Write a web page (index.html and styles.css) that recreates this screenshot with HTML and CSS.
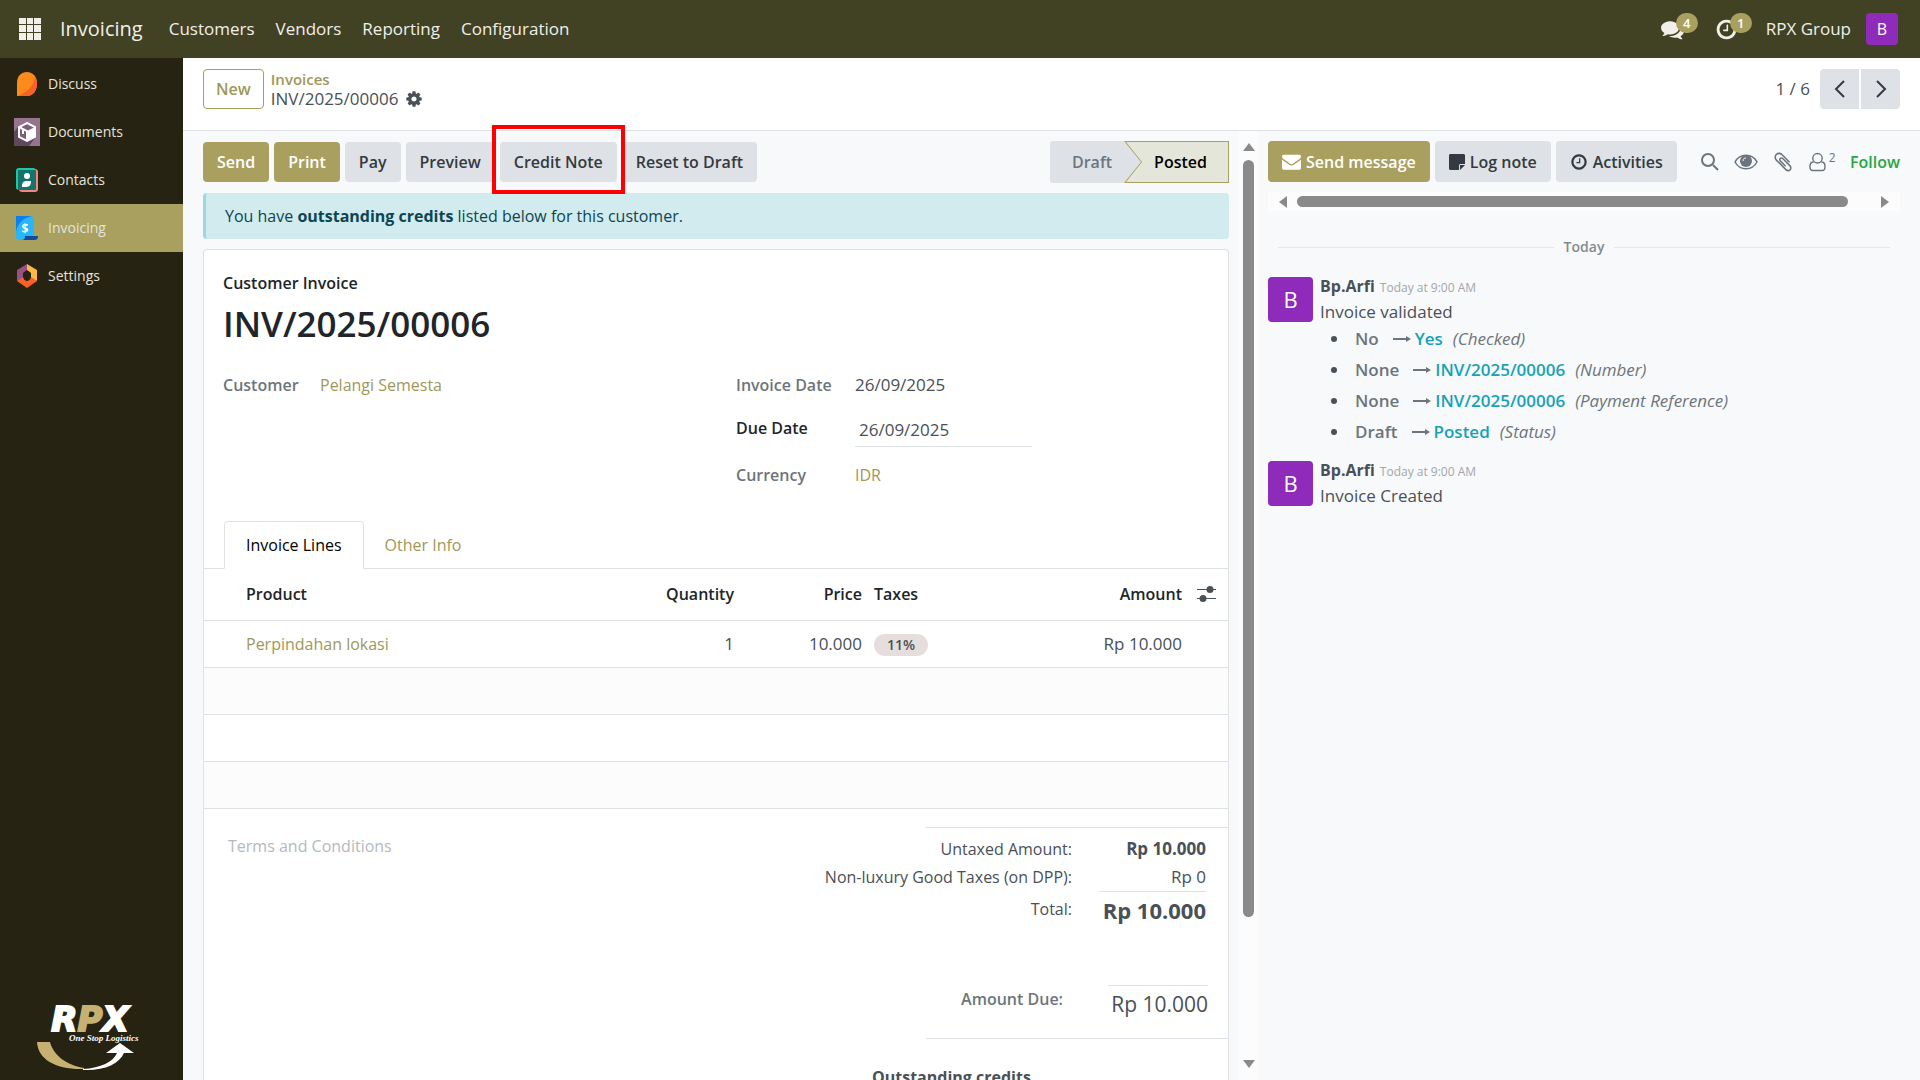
FILE: index.html
```html
<!DOCTYPE html>
<html lang="en">
<head>
<meta charset="utf-8">
<title>INV/2025/00006 - Invoicing</title>
<link rel="stylesheet" href="styles.css">
</head>
<body>
<svg class="defs" aria-hidden="true">
  <symbol id="cog" viewBox="0 0 1792 1792"><path d="M1152 896q0-106-75-181t-181-75-181 75-75 181 75 181 181 75 181-75 75-181zm512-109v222q0 12-8 23t-20 13l-185 28q-19 54-39 91 35 50 107 138 10 12 10 25t-9 23q-27 37-99 108t-94 71q-12 0-26-9l-138-108q-44 23-91 38-16 136-29 186-7 28-36 28h-222q-14 0-24.500-8.500t-11.500-21.500l-28-184q-49-16-90-37l-141 107q-10 9-25 9-14 0-25-11-126-114-165-168-7-10-7-23 0-12 8-23 15-21 51-66.500t54-70.500q-27-50-41-99l-183-27q-13-2-21-12.500t-8-23.500v-222q0-12 8-23t19-13l186-28q14-46 39-92-40-57-107-138-10-12-10-24 0-10 9-23 26-36 98.500-107.500t94.500-71.500q13 0 26 10l138 107q44-23 91-38 16-136 29-186 7-28 36-28h222q14 0 24.500 8.500t11.500 21.500l28 184q49 16 90 37l142-107q9-9 24-9 13 0 25 10 129 119 165 170 7 8 7 22 0 12-8 23-15 21-51 66.500t-54 70.500q26 50 41 98l183 28q13 2 21 12.500t8 23.500z"/></symbol>
  <symbol id="comments" viewBox="0 0 1792 1792"><path d="M1408 768q0 139-94 257t-256.500 186.500-353.500 68.500q-86 0-176-16-124 88-278 128-36 9-86 16h-3q-11 0-20.500-8t-11.500-21q-1-3-1-6.500t.5-6.500 2-6l2.500-5 3.500-5.500 4-5 4.500-5 4-4.500q5-6 23-25t26-29.500 22.500-29 25-38.500 20.500-44q-124-72-195-177t-71-224q0-139 94-257t256.500-186.500 353.500-68.500 353.500 68.500 256.500 186.500 94 257zm384 256q0 120-71 224.500t-195 176.500q10 24 20.500 44t25 38.500 22.500 29 26 29.500 23 25q1 1 4 4.500t4.500 5 4 5 3.500 5.500l2.500 5 2 6 .5 6.500-1 6.500q-3 14-13 22t-22 7q-50-7-86-16-154-40-278-128-90 16-176 16-271 0-472-132 58 4 88 4 161 0 309-45t264-129q125-92 192-212t67-254q0-77-23-152 129 71 204 178t75 230z"/></symbol>
  <symbol id="clock" viewBox="0 0 1792 1792"><path d="M1024 544v448q0 14-9 23t-23 9h-320q-14 0-23-9t-9-23v-64q0-14 9-23t23-9h224v-352q0-14 9-23t23-9h64q14 0 23 9t9 23zm416 352q0-148-73-273t-198-198-273-73-273 73-198 198-73 273 73 273 198 198 273 73 273-73 198-198 73-273zm224 0q0 209-103 385.500t-279.500 279.500-385.500 103-385.500-103-279.500-279.500-103-385.500 103-385.500 279.500-279.500 385.500-103 385.500 103 279.500 279.500 103 385.500z"/></symbol>
  <symbol id="envelope" viewBox="0 0 1792 1792"><path d="M1792 710v794q0 66-47 113t-113 47h-1472q-66 0-113-47t-47-113v-794q44 49 101 87 362 246 497 345 57 42 92.500 65.500t94.500 48 110 24.500h2q51 0 110-24.500t94.500-48 92.500-65.500q170-123 498-345 57-39 100-87zm0-294q0 79-49 151t-122 123q-376 261-468 325-10 7-42.500 31t-54 38.500-52 32.500-57.500 27-50 9h-2q-23 0-50-9t-57.500-27-52-32.500-54-38.500-42.500-31q-91-64-262-182.500t-205-142.500q-62-42-117-115.500t-55-136.500q0-78 41.500-130t118.500-52h1472q65 0 112.500 47t47.500 113z"/></symbol>
  <symbol id="clip" viewBox="0 0 1792 1792"><path d="M1596 1385q0 117-79 196t-196 79q-135 0-235-100l-777-776q-113-115-113-271 0-159 110-270t269-111q158 0 273 113l605 606q10 10 10 22 0 16-30.500 46.500t-46.500 30.500q-13 0-23-10l-606-607q-79-77-181-77-106 0-179 75t-73 181q0 105 76 181l776 777q63 63 145 63 64 0 106-42t42-106q0-82-63-145l-581-581q-26-24-60-24-29 0-48 19t-19 48q0 32 25 59l410 410q10 10 10 22 0 16-31 47t-47 31q-12 0-22-10l-410-410q-63-61-63-149 0-82 57-139t139-57q88 0 149 63l581 581q100 98 100 235z"/></symbol>
  <symbol id="arrow" viewBox="0 0 18 10"><path d="M0 4h13V2l5 3-5 3V6H0z"/></symbol>
</svg>

<header class="navbar">
  <button class="apps" aria-label="Home menu">
    <svg width="22" height="22" viewBox="0 0 22 22"><path d="M0 0h7v6H0zM8 0h6v6H8zM15 0h7v6h-7zM0 7h7v7H0zM8 7h6v7H8zM15 7h7v7h-7zM0 15h7v7H0zM8 15h6v7H8zM15 15h7v7h-7z" fill="#f0efea"/></svg>
  </button>
  <a class="brand" href="#">Invoicing</a>
  <nav class="menu">
    <a href="#">Customers</a><a href="#">Vendors</a><a href="#">Reporting</a><a href="#">Configuration</a>
  </nav>
  <div class="systray">
    <button class="tray" aria-label="Messages"><svg width="23" height="23"><use href="#comments"/></svg><span class="count">4</span></button>
    <button class="tray" aria-label="Activities"><svg width="23" height="23"><use href="#clock"/></svg><span class="count">1</span></button>
    <span class="company">RPX Group</span>
    <button class="user">B</button>
  </div>
</header>

<div class="shell">
  <aside class="sidebar">
    <nav>
      <a class="app" href="#"><svg width="22" height="24" viewBox="0 0 20 24"><path d="M0 24V11C0 4 4 0 10 0s10 5 10 11-3 13-10 13z" fill="#fc8a1c"/><path d="M18 5c1 2 2 4 2 7 0 7-4 12-10 12H1C9 21 17 14 18 5z" fill="#f8602c"/></svg>Discuss</a>
      <a class="app wide" href="#"><svg width="26" height="28" viewBox="0 0 26 28"><path d="M0 0h26v28H0z" fill="#967490"/><path d="M4 9L0 14v14h15l7-9z" fill="#5f475c"/><path d="M13 5l8 4v10l-8 4-8-4V9z" fill="#7d5f78" stroke="#fff" stroke-width="2"/><path d="M13 13l8-4v10l-8 4z" fill="#fff"/><path d="M5 9l8 4v9M9 11v5" fill="none" stroke="#fff" stroke-width="2"/></svg>Documents</a>
      <a class="app" href="#"><svg width="22" height="24" viewBox="0 0 22 24"><rect x="3" y="1" width="19" height="23" rx="3" fill="#f28482"/><rect width="20" height="22" rx="3" fill="#1bc8a8"/><rect x="2" y="2" width="18" height="20" rx="1" fill="#15736c"/><circle cx="11" cy="8" r="3" fill="#fff"/><path d="M6 18c0-4 2-5 5-5h4c0 3-1 6-5 6H6z" fill="#fff"/></svg>Contacts</a>
      <a class="app active" href="#"><svg width="22" height="24" viewBox="0 0 22 24"><path d="M0 0h14c3 0 4 2 4 5v14l-9 5H3c-2 0-3-1-3-3z" fill="#2bb5f9"/><path d="M0 0h16C8 2 2 6 0 16z" fill="#0e80ee"/><path d="M9 20h13c0 3-1 4-4 4H5c3 0 4-1 4-4z" fill="#14499b"/><text x="9" y="17" text-anchor="middle" class="dollar">$</text></svg>Invoicing</a>
      <a class="app" href="#"><svg width="22" height="24" viewBox="0 0 22 24"><path d="M11 0L1 6v11l6-3V9l4-3z" fill="#985184"/><path d="M11 0l10 6v11l-6-3V9l-4-3z" fill="#fbb945"/><path d="M1 17l6-4 4 4 4-4 6 4-10 7z" fill="#fa6128"/><ellipse cx="11" cy="12" rx="4" ry="5" fill="#262312"/></svg>Settings</a>
    </nav>
    <svg class="logo" width="108" height="76" viewBox="0 -16 108 76" role="img" aria-label="RPX One Stop Logistics">
      <path d="M0 31h13c3 12 15 23 34 26v1C20 59 1 49 0 31z" fill="#c6b172"/>
      <path d="M46 58c18-1 30-7 34-16h-11l14-10 14 10H87c-5 11-20 18-41 17z" fill="#fff"/>
      <text x="53" y="20" text-anchor="middle" class="logo-name">R<tspan class="gold">P</tspan>X</text>
      <text x="32" y="30" class="logo-tag">One Stop Logistics</text>
    </svg>
  </aside>

  <main class="content">
    <div class="control-panel">
      <button class="btn outline">New</button>
      <div class="crumbs">
        <a href="#">Invoices</a>
        <span class="current">INV/2025/00006 <svg width="18" height="18"><use href="#cog"/></svg></span>
      </div>
      <div class="pager">
        <span>1 / 6</span>
        <button class="btn prev" aria-label="Previous"><svg width="12" height="20" viewBox="0 0 12 20"><path d="M10 2L2 10l8 8"/></svg></button>
        <button class="btn next" aria-label="Next"><svg width="12" height="20" viewBox="0 0 12 20"><path d="M2 2l8 8-8 8"/></svg></button>
      </div>
    </div>

    <div class="view">
      <section class="form">
        <div class="statusbar">
          <div class="actions">
            <button class="btn primary">Send</button>
            <button class="btn primary">Print</button>
            <button class="btn">Pay</button>
            <button class="btn">Preview</button>
            <span class="marked"><button class="btn">Credit Note</button></span>
            <button class="btn">Reset to Draft</button>
          </div>
          <div class="stages">
            <span class="stage">Draft</span>
            <span class="stage now"><svg width="105" height="42" viewBox="0 0 105 42"><path d="M0 0h105v42H0l17-21z" fill="#a9a05f"/><path d="M2 1h102v40H2l16-20z" fill="#e5e6da"/></svg><b>Posted</b></span>
          </div>
        </div>

        <div class="alert">You have <b>outstanding credits</b> listed below for this customer.</div>

        <div class="sheet">
          <div class="kind">Customer Invoice</div>
          <h1>INV/2025/00006</h1>
          <div class="fields">
            <div class="field customer"><span class="label">Customer</span><a href="#">Pelangi Semesta</a></div>
            <div class="group">
              <div class="field"><span class="label">Invoice Date</span><span class="date">26/09/2025</span></div>
              <div class="field due"><label class="label" for="due">Due Date</label><input id="due" class="date" type="text" value="26/09/2025"></div>
              <div class="field"><span class="label">Currency</span><a href="#">IDR</a></div>
            </div>
          </div>

          <div class="tabs" role="tablist">
            <button class="tab on" role="tab">Invoice Lines</button>
            <button class="tab" role="tab">Other Info</button>
          </div>

          <table class="lines">
            <colgroup><col><col class="c-qty"><col class="c-price"><col class="c-tax"><col class="c-amount"><col class="c-opt"></colgroup>
            <thead><tr><th>Product</th><th class="num">Quantity</th><th class="num">Price</th><th class="tax">Taxes</th><th class="num">Amount</th><th class="opt"><svg width="19" height="18" viewBox="0 0 19 18"><path d="M0 4h19v1H0zM0 13h19v1H0z"/><circle cx="13" cy="4.500" r="3.500"/><circle cx="6" cy="13.500" r="3.500"/></svg></th></tr></thead>
            <tbody>
              <tr><td><a href="#">Perpindahan lokasi</a></td><td class="num">1</td><td class="num">10.000</td><td class="tax"><span class="badge">11%</span></td><td class="num">Rp 10.000</td><td></td></tr>
              <tr class="alt"><td colspan="6"></td></tr>
              <tr><td colspan="6"></td></tr>
              <tr class="alt"><td colspan="6"></td></tr>
            </tbody>
          </table>

          <div class="footer">
            <textarea class="terms" placeholder="Terms and Conditions" aria-label="Terms and Conditions"></textarea>
            <div class="totals">
              <div class="rule"></div>
              <dl class="sums">
                <dt>Untaxed Amount:</dt><dd><b>Rp 10.000</b></dd>
                <dt>Non-luxury Good Taxes (on DPP):</dt><dd>Rp 0</dd>
                <dt class="grand">Total:</dt><dd class="grand"><b>Rp 10.000</b></dd>
              </dl>
              <dl class="due-sum"><dt>Amount Due:</dt><dd>Rp 10.000</dd></dl>
              <div class="rule"></div>
              <div class="credits">Outstanding credits</div>
            </div>
          </div>
        </div>
      </section>

      <div class="vscroll" aria-hidden="true">
        <svg width="12" height="8" viewBox="0 0 12 8"><path d="M6 0l6 8H0z"/></svg>
        <div class="vtrack"><div class="thumb"></div></div>
        <svg width="12" height="8" viewBox="0 0 12 8"><path d="M0 0h12L6 8z"/></svg>
      </div>

      <aside class="chatter">
        <div class="topbar">
          <button class="btn primary"><svg width="19" height="19"><use href="#envelope"/></svg>Send message</button>
          <button class="btn"><svg width="16" height="16" viewBox="0 0 16 16"><path d="M1 0h14l1 1v9h-5l-1 1v5H1l-1-1V1zM11 11h5l-5 5z"/></svg>Log note</button>
          <button class="btn"><svg width="18" height="18"><use href="#clock"/></svg>Activities</button>
          <div class="tools">
            <button aria-label="Search"><svg width="20" height="20" viewBox="0 0 20 20" class="line"><circle cx="8" cy="8" r="6"/><path d="M13 13l5 5"/></svg></button>
            <button aria-label="View"><svg width="24" height="18" viewBox="0 0 24 18"><path d="M1 9C6 0 18 0 23 9c-5 9-17 9-22 0z" fill="none" stroke="#6c757d" stroke-width="1.500"/><circle cx="12" cy="8" r="6"/><path d="M9 8c0-2 1-3 3-3" fill="none" stroke="#f8f9fa"/></svg></button>
            <button aria-label="Attachments"><svg width="22" height="22"><use href="#clip"/></svg></button>
            <button aria-label="Followers" class="followers"><svg width="17" height="20" viewBox="0 0 18 20" class="line thin"><circle cx="9" cy="6" r="5"/><path d="M5 10c-3 0-4 3-4 5 0 3 1 4 3 4h10c2 0 3-1 3-4 0-2-1-5-4-5"/></svg><sup>2</sup></button>
            <button class="follow">Follow</button>
          </div>
        </div>
        <div class="hscroll" aria-hidden="true">
          <svg width="8" height="12" viewBox="0 0 8 12"><path d="M8 0v12L0 6z"/></svg>
          <div class="htrack"><div class="thumb"></div></div>
          <svg width="8" height="12" viewBox="0 0 8 12"><path d="M0 0v12l8-6z"/></svg>
        </div>
        <div class="day">Today</div>
        <article class="message">
          <div class="avatar">B</div>
          <div>
            <div class="author"><b>Bp.Arfi</b><time>Today at 9:00 AM</time></div>
            <div class="text">Invoice validated</div>
            <ul>
              <li><b>No</b><svg width="18" height="10"><use href="#arrow"/></svg><strong>Yes</strong><i>(Checked)</i></li>
              <li><b>None</b><svg width="18" height="10"><use href="#arrow"/></svg><strong>INV/2025/00006</strong><i>(Number)</i></li>
              <li><b>None</b><svg width="18" height="10"><use href="#arrow"/></svg><strong>INV/2025/00006</strong><i>(Payment Reference)</i></li>
              <li><b>Draft</b><svg width="18" height="10"><use href="#arrow"/></svg><strong>Posted</strong><i>(Status)</i></li>
            </ul>
          </div>
        </article>
        <article class="message">
          <div class="avatar">B</div>
          <div>
            <div class="author"><b>Bp.Arfi</b><time>Today at 9:00 AM</time></div>
            <div class="text">Invoice Created</div>
          </div>
        </article>
      </aside>
    </div>
  </main>
</div>
</body>
</html>
```
FILE: styles.css
```css
* { box-sizing: border-box; }
body {
  margin: 0;
  height: 100vh;
  display: flex;
  flex-direction: column;
  overflow: hidden;
  font: 16px/24px "Open Sans", "Noto Sans", sans-serif;
  color: #495057;
  background: #f8f9fa;
}
a { color: #a09858; text-decoration: none; }
button { font: inherit; color: inherit; border: 0; padding: 0; background: none; }
svg { flex: none; fill: currentColor; }
.defs { position: absolute; width: 0; height: 0; }

/* top navigation */
.navbar {
  flex: none;
  display: flex;
  align-items: center;
  height: 58px;
  padding: 0 22px 0 19px;
  background: #414124;
  color: #f0efea;
}
.navbar a { color: inherit; }
.apps { display: flex; }
.brand { margin-left: 19px; font-size: 20px; }
.menu { display: flex; gap: 21px; margin-left: 26px; font-size: 17px; }
.systray { display: flex; align-items: center; margin-left: auto; }
.tray { position: relative; display: flex; width: 54px; }
.count {
  position: absolute;
  left: 15px;
  top: -5px;
  width: 22px;
  height: 20px;
  border-radius: 10px;
  background: #a9a05f;
  color: #fff;
  font-size: 13px;
  font-weight: 600;
  line-height: 20px;
  text-align: center;
}
.company { margin: 0 15px 0 -3px; font-size: 17px; }
.user { width: 32px; height: 32px; border-radius: 4px; background: #8f2bba; color: #fff; }

/* application list */
.shell { flex: 1; display: flex; min-height: 0; }
.sidebar {
  flex: none;
  display: flex;
  flex-direction: column;
  justify-content: space-between;
  width: 183px;
  background: #262312;
  color: #e4e3dd;
}
.sidebar nav { padding-top: 2px; }
.app {
  display: flex;
  align-items: center;
  gap: 10px;
  height: 48px;
  padding: 0 16px;
  color: inherit;
  font-size: 14px;
}
.app.wide { padding-left: 14px; gap: 8px; }
.app.active { background: #a9a05f; }
.dollar { font: 700 12px "Open Sans", sans-serif; fill: #fff; }
.logo { margin: 0 0 9px 37px; overflow: visible; }
.logo-name { font: italic 700 34px "DejaVu Sans", sans-serif; fill: #fff; stroke: #fff; stroke-width: 2px; }
.gold { fill: #c6b172; stroke: #c6b172; }
.logo-tag { font: italic 700 9px "Liberation Serif", serif; fill: #fff; }

/* control panel */
.content { flex: 1; display: flex; flex-direction: column; min-width: 0; }
.control-panel {
  flex: none;
  display: flex;
  height: 73px;
  padding: 11px 20px 0;
  border-bottom: 1px solid #dee2e6;
  background: #fff;
}
.btn {
  display: flex;
  align-items: center;
  justify-content: center;
  gap: 5px;
  height: 40px;
  padding: 0 14px;
  border-radius: 4px;
  background: #dee2e6;
  color: #343a40;
  font-weight: 600;
  white-space: nowrap;
}
.btn.primary { background: #a9a05f; color: #fff; }
.btn.outline { padding: 0 12px; border: 1px solid #a9a05f; background: #fff; color: #a09858; }
.crumbs { display: flex; flex-direction: column; margin-left: 7px; line-height: 20px; }
.crumbs a { font-size: 15px; font-weight: 600; }
.current { display: flex; align-items: center; gap: 7px; font-size: 17px; }
.pager { display: flex; align-items: center; height: 40px; margin-left: auto; font-size: 17px; }
.pager .btn { width: 39px; }
.pager path { fill: none; stroke: #343a40; stroke-width: 2; }
.prev { margin: 0 2px 0 10px; border-radius: 4px 0 0 4px; }
.next { border-radius: 0 4px 4px 0; }

/* form */
.view { flex: 1; display: flex; min-height: 0; }
.form { flex: 1; display: flex; flex-direction: column; min-width: 0; padding: 10px 10px 0 20px; }
.statusbar { flex: none; display: flex; align-items: center; justify-content: space-between; height: 42px; }
.actions { display: flex; gap: 5px; }
.marked { position: relative; }
.marked::after {
  content: "";
  position: absolute;
  inset: -17px -8px -12px;
  border: 4px solid #f00;
}
.stages { display: flex; font-weight: 600; color: #6c757d; }
.stage { width: 74px; padding-left: 10px; line-height: 42px; text-align: center; background: #dee2e6; border-radius: 3px 0 0 3px; }
.stage.now { display: grid; width: 105px; padding: 0; color: #000; }
.stage.now > * { grid-area: 1 / 1; font-weight: 600; }
.stage.now b { padding-left: 8px; }
.alert {
  flex: none;
  margin: 10px 0;
  padding: 11px 19px;
  border-left: 3px solid #9dd8e0;
  border-radius: 4px;
  background: #d1ebef;
  color: #0c4650;
}
.sheet { flex: 1; min-height: 0; overflow: hidden; border: 1px solid #dee2e6; border-bottom: 0; border-radius: 4px 4px 0 0; background: #fff; padding-top: 21px; }
.kind { padding-left: 19px; color: #212529; font-weight: 600; }
h1 { margin: 5px 0 0; padding-left: 19px; font-size: 35px; line-height: 48px; font-weight: 600; color: #212529; }
.fields { display: grid; grid-template-columns: 1fr 1fr; padding: 25px 19px 0; height: 173px; }
.field { display: grid; grid-template-columns: 119px 1fr; }
.field.customer { grid-template-columns: 97px 1fr; }
.group { display: flex; flex-direction: column; gap: 16px; padding-left: 20px; }
.label { font-weight: 600; color: #6c757d; }
.due .label { padding-top: 3px; color: #212529; }
.date { font-size: 17px; }
.due input {
  width: 177px;
  height: 34px;
  padding: 0 4px;
  border: 0;
  border-bottom: 1px solid #dee2e6;
  background: none;
  color: inherit;
  font-family: inherit;
}
.tabs { display: flex; padding-left: 20px; border-bottom: 1px solid #dee2e6; }
.tab { height: 47px; padding: 0 21px; color: #a09858; }
.tab.on { margin-bottom: -1px; height: 48px; border: 1px solid #dee2e6; border-bottom-color: #fff; border-radius: 4px 4px 0 0; background: #fff; color: #000; }
.lines { width: 100%; border-collapse: collapse; table-layout: fixed; }
.lines tr { height: 47px; border-bottom: 1px solid #dee2e6; }
.lines thead tr { height: 51px; }
.lines th { padding: 0; color: #212529; font-weight: 600; text-align: left; }
.lines td { padding: 0; }
.lines th:first-child, .lines td:first-child { padding-left: 42px; }
.lines .num { text-align: right; }
.lines td.num { font-size: 17px; }
.lines .tax { padding-left: 12px; }
.lines .opt { padding-left: 15px; color: #495057; }
.opt svg { display: block; }
.alt { background: #fcfcfc; }
.c-qty { width: 128px; }
.c-price { width: 128px; }
.c-tax { width: 160px; }
.c-amount { width: 160px; }
.c-opt { width: 46px; }
.badge { display: inline-block; padding: 0 13px; border-radius: 11px; background: #e5dedd; font-size: 14px; line-height: 22px; font-weight: 600; }

/* totals */
.footer { display: flex; justify-content: space-between; padding-top: 18px; }
.terms { width: 300px; height: 60px; margin: 7px 0 0 20px; padding: 0 4px; border: 0; resize: none; background: none; font: inherit; }
.terms::placeholder { color: #b5b9bd; }
.totals { display: flex; flex-direction: column; width: 420px; }
.rule { align-self: flex-end; width: 302px; border-top: 1px solid #dee2e6; }
dl { display: grid; margin: 0; text-align: right; }
dd { margin: 0; font-size: 17px; }
.sums { grid-template-columns: 1fr 107px; column-gap: 27px; padding: 7px 22px 0 0; line-height: 28px; }
.sums .grand { line-height: 36px; }
dd.grand { border-top: 1px solid #dee2e6; font-size: 22px; }
.due-sum { grid-template-columns: 1fr 100px; column-gap: 45px; padding: 57px 20px 16px 0; line-height: 36px; }
.due-sum dt { color: #6c757d; font-weight: 600; line-height: 28px; }
.due-sum dd { border-top: 1px solid #dee2e6; font-size: 21px; font-weight: 500; }
.credits { padding: 26px 0 60px 64px; font-weight: 700; }

/* scrollbars */
.vscroll { flex: none; display: flex; flex-direction: column; align-items: center; width: 19px; padding: 12px 0; color: #8a8a8a; background: #fcfcfc; }
.vtrack { flex: 1; width: 11px; margin: 9px 0; }
.thumb { border-radius: 6px; background: #8a8a8a; }
.vtrack .thumb { height: 85%; }
.hscroll { display: flex; align-items: center; height: 19px; margin-top: 10px; padding: 0 11px; color: #8a8a8a; background: #fcfcfc; }
.htrack { flex: 1; margin: 0 10px; }
.htrack .thumb { width: 96%; height: 11px; }

/* chatter */
.chatter { flex: none; width: 662px; padding: 10px 20px 0 10px; }
.topbar { display: flex; gap: 5px; }
.topbar .btn { height: 41px; }
.tools { flex: 1; display: flex; align-items: center; justify-content: space-between; padding-left: 18px; color: #6c757d; }
.tools button { display: flex; }
.line { fill: none; stroke: #6c757d; stroke-width: 2; }
.line.thin { stroke-width: 1.500; }
sup { font-size: 12px; line-height: 12px; margin-left: 3px; }
.tools .follow { color: #28a745; font-weight: 600; }
.day { display: flex; align-items: center; gap: 10px; margin: 24px 10px 15px; color: #868b90; font-size: 14px; font-weight: 600; }
.day::before, .day::after { content: ""; flex: 1; border-top: 1px solid #e6e8ea; }
.message { display: flex; gap: 7px; margin-bottom: 11px; }
.avatar { flex: none; width: 45px; height: 45px; margin-top: 3px; border-radius: 4px; background: #8f2bba; color: #fff; font-size: 22px; line-height: 45px; text-align: center; }
.author { display: flex; align-items: baseline; gap: 5px; }
time { color: #a3a7ab; font-size: 12px; }
.text { font-size: 17px; line-height: 23px; }
.message ul { margin: 0; padding: 0 0 0 35px; font-size: 17px; line-height: 31px; list-style: none; }
.message li { display: flex; align-items: center; color: #6c757d; }
.message li::before { content: ""; width: 6px; height: 6px; margin: 0 18px 0 -24px; border-radius: 3px; background: #495057; }
.message li b { margin-right: 14px; font-weight: 600; }
.message li strong { margin: 0 10px 0 4px; color: #17a2b8; font-weight: 600; }
```
